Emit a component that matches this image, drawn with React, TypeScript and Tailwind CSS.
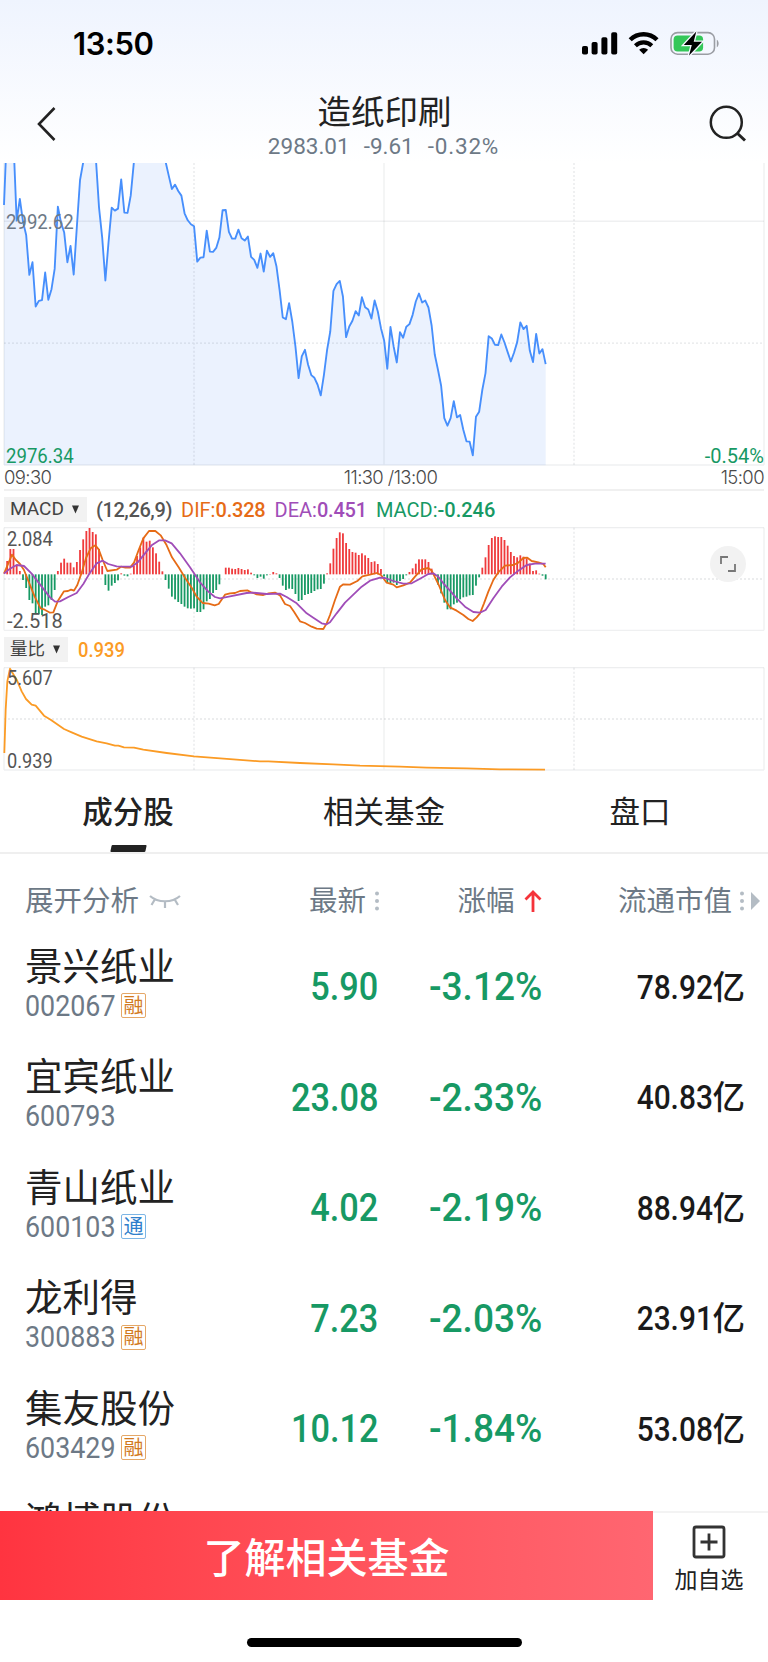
import { ReactNode } from 'react';

interface Stock {
  name: string;
  code: string;
  tag?: '融' | '通';
  price: string;
  change: string;
  cap: string;
}

const stocks: Stock[] = [
  { name: '景兴纸业', code: '002067', tag: '融', price: '5.90', change: '-3.12%', cap: '78.92' },
  { name: '宜宾纸业', code: '600793', price: '23.08', change: '-2.33%', cap: '40.83' },
  { name: '青山纸业', code: '600103', tag: '通', price: '4.02', change: '-2.19%', cap: '88.94' },
  { name: '龙利得', code: '300883', tag: '融', price: '7.23', change: '-2.03%', cap: '23.91' },
  { name: '集友股份', code: '603429', tag: '融', price: '10.12', change: '-1.84%', cap: '53.08' },
];

// One value per sample, in chart units (three units per pixel).
const price = [
  150, -90, -90, -40, 197, 132, 200, 240, 360, 322, 455, 438, 436, 353, 435, 403, 342, 155, 203, 233, 322, 273, 359,
  215, 75, 22, -60, -60, -60, 10, 158, 248, 377, 262, 158, 167, 161, 73, 173, 174, 122, 22, -80, -80, -80, -80, -80,
  -80, -80, -80, -80, 20, 62, 102, 89, 108, 122, 175, 196, 208, 214, 320, 308, 307, 227, 290, 291, 279, 248, 166, 165,
  231, 251, 251, 224, 250, 257, 245, 306, 315, 339, 296, 350, 287, 306, 295, 334, 406, 488, 493, 445, 500, 575, 670,
  605, 585, 630, 661, 669, 690, 722, 660, 585, 530, 408, 388, 378, 425, 547, 515, 498, 469, 482, 427, 457, 464, 491,
  437, 470, 520, 557, 642, 516, 575, 623, 532, 549, 516, 508, 480, 440, 416, 443, 437, 458, 512, 600, 645, 693, 790,
  813, 790, 739, 788, 781, 825, 860, 861, 902, 786, 771, 705, 655, 544, 551, 570, 571, 539, 563, 592, 620, 594, 562,
  503, 523, 513, 588, 622, 537, 596, 583, 628,
];

const macd = [
  343, 303, 267, 267, 317, 333, 360, 384, 420, 430, 459, 463, 465, 440, 436, 420, 390, 333, 308, 296, 308, 308, 322,
  306, 270, 238, 213, 204, 216, 223, 267, 318, 375, 392, 377, 369, 361, 340, 347, 349, 341, 318, 288, 262, 233, 245,
  242, 262, 280, 305, 334, 360, 386, 410, 418, 426, 432, 440, 445, 446, 445, 456, 456, 448, 424, 417, 399, 390, 373,
  343, 323, 323, 326, 327, 324, 327, 330, 328, 338, 346, 354, 350, 356, 346, 342, 336, 340, 354, 377, 390, 386, 387,
  402, 423, 420, 405, 402, 399, 393, 388, 387, 371, 340, 310, 266, 234, 217, 220, 249, 267, 276, 278, 285, 280, 286,
  294, 306, 304, 312, 327, 349, 368, 370, 368, 375, 363, 357, 346, 336, 325, 311, 298, 298, 298, 306, 326, 348, 374,
  400, 428, 448, 448, 433, 428, 418, 412, 410, 406, 405, 377, 352, 323, 292, 255, 234, 229, 231, 231, 240, 257, 276,
  288, 292, 286, 290, 295, 311, 333, 331, 341, 347, 358,
];

const dif =
  '12,341 25,310 36,284 46,298 60,312 72,330 88,370 104,410 122,445 134,449 150,458 160,457 173,424 192,394 204,393 213,389 222,392 232,375 245,338 258,294 272,265 286,256 296,268 308,300 322,333 350,329 363,320 376,323 390,323 402,308 416,270 430,235 447,213 466,213 482,226 500,256 516,292 536,322 556,355 575,383 590,410 608,429 626,431 644,436 656,432 675,404 690,400 705,399 720,393 742,391 752,396 770,403 790,405 806,400 825,398 840,406 855,432 870,438 882,455 900,484 915,489 935,500 950,506 970,507 980,490 990,465 1005,420 1020,380 1030,373 1050,374 1072,363 1087,349 1110,344 1130,339 1143,345 1160,368 1180,374 1190,382 1210,376 1230,368 1245,350 1265,328 1285,324 1295,332 1315,372 1335,420 1350,442 1370,452 1390,465 1405,477 1418,483 1430,472 1440,460 1452,430 1465,395 1480,360 1495,337 1515,317 1540,315 1555,308 1570,294 1582,293 1595,303 1615,307 1630,312 1637,322';

const dea =
  '12,341 30,326 50,315 72,318 95,341 125,380 150,412 165,425 180,424 205,411 230,399 250,372 270,338 290,310 308,302 325,312 350,319 395,320 415,305 435,280 455,256 478,241 495,241 515,250 540,280 570,322 600,367 625,395 645,411 660,415 690,409 740,399 760,398 800,402 840,401 860,411 890,430 920,460 940,473 965,490 980,493 990,487 1010,460 1035,428 1060,404 1085,380 1110,362 1140,353 1155,354 1180,363 1210,371 1235,370 1260,356 1285,342 1300,340 1315,350 1330,370 1350,392 1370,415 1395,440 1420,456 1440,458 1457,450 1480,415 1505,380 1530,352 1555,332 1580,315 1605,311 1637,311';

const ratio =
  '13,370 17,240 22,155 30,117 50,150 65,185 78,208 95,225 107,228 132,258 152,270 192,298 215,308 245,321 290,335 320,341 345,348 355,348 372,353 402,354 430,360 500,370 582,380 700,389 780,395 805,395 900,400 1000,404 1080,408 1200,411 1280,414 1400,416 1500,419 1635,420';

const xAt = (i: number) => 12 + i * 9.503;

const din = "font-['Roboto','Noto_Sans_CJK_SC',sans-serif]";

function Grid({ top, bottom, mid }: { top: number; bottom: number; mid: number }) {
  return (
    <g stroke="#1f2937" strokeOpacity="0.07" strokeWidth="4" fill="none">
      <path d={`M12 ${bottom}H2292M12 ${top}V${bottom}M2292 ${top}V${bottom}M1152 ${top}V${bottom}`} />
      <path
        d={`M12 ${mid}H2292M582 ${top}V${bottom}M1722 ${top}V${bottom}`}
        strokeOpacity="0.11"
        strokeDasharray="6 6"
      />
    </g>
  );
}

function PriceChart() {
  const line = price.map((y, i) => `${xAt(i).toFixed(1)},${y}`).join(' ');
  return (
    <svg viewBox="0 24 2304 910" preserveAspectRatio="none" className="block h-[303px] w-[768px]">
      <polygon points={`12,932 ${line} ${xAt(price.length - 1)},932`} fill="#ebf2fe" />
      <Grid top={24} bottom={931} mid={565} />
      <path d="M12 199H2292" stroke="#1f2937" strokeOpacity="0.07" strokeWidth="4" />
      <polyline points={line} fill="none" stroke="#478ffc" strokeWidth="5.6" strokeLinejoin="round" />
    </svg>
  );
}

function MacdChart() {
  return (
    <svg viewBox="0 201 2304 312" className="block h-[104px] w-[768px]">
      <Grid top={203} bottom={511} mid={357} />
      <path d="M12 203H2292" stroke="#1f2937" strokeOpacity="0.08" strokeWidth="4" />
      {macd.map((y, i) => (
        <rect
          key={i}
          x={xAt(i) - 2.7}
          y={Math.min(y, 343)}
          width="5.4"
          height={Math.abs(y - 343)}
          fill={y < 343 ? '#ef3a3c' : '#179964'}
        />
      ))}
      <polyline points={dif} fill="none" stroke="#e66b16" strokeWidth="5.4" strokeLinejoin="round" />
      <polyline points={dea} fill="none" stroke="#a04db8" strokeWidth="5.4" strokeLinejoin="round" />
    </svg>
  );
}

function RatioChart() {
  return (
    <svg viewBox="0 112 2304 312" className="block h-[104px] w-[768px]">
      <Grid top={114} bottom={421} mid={268} />
      <path d="M12 114H2292" stroke="#1f2937" strokeOpacity="0.08" strokeWidth="4" />
      <polyline points={ratio} fill="none" stroke="#fb9b25" strokeWidth="5.4" strokeLinejoin="round" />
    </svg>
  );
}

function StatusBar() {
  return (
    <div className="flex h-[88px] items-center justify-between pr-[49px] pl-[73px]">
      <span className="font-['Inter',sans-serif] text-[31px] font-semibold tracking-[-0.4px] text-black">13:50</span>
      <svg viewBox="0 0 137 26" className="h-[26px] w-[137px]">
        <g fill="#000">
          <rect x="0" y="15" width="6" height="8.5" rx="1.8" />
          <rect x="9.6" y="11" width="6" height="12.5" rx="1.8" />
          <rect x="19.4" y="6.3" width="6" height="17.2" rx="1.8" />
          <rect x="29.2" y="1.2" width="6" height="22.3" rx="1.8" />
          <path d="M61.6 23.2l-4.5-4.5a6.6 6.6 0 0 1 9 0z" />
        </g>
        <path d="M48.2 8.8a19 19 0 0 1 26.8 0" fill="none" stroke="#000" strokeWidth="4.4" />
        <path d="M53.4 14.7a12 12 0 0 1 16.4 0" fill="none" stroke="#000" strokeWidth="4.2" />
        <rect x="89" y="1.6" width="43.5" height="21.6" rx="6.5" fill="none" stroke="#9a9da3" strokeWidth="1.6" />
        <path d="M134.8 8.8c2.4 1 2.4 6.4 0 7.4z" fill="#9a9da3" />
        <rect x="91.6" y="4.4" width="29.5" height="16" rx="4" fill="#34c759" />
        <path
          d="M114.3 0.5L101.8 14h8l-2.8 10.500L120 10.800h-8.300z"
          fill="#000"
          stroke="#f4f8fe"
          strokeWidth="2.6"
          paintOrder="stroke"
        />
      </svg>
    </div>
  );
}

function NavBar() {
  return (
    <div className="flex h-[75px] items-start justify-between pr-[21px] pl-[36px]">
      <svg viewBox="0 0 22 36" className="mt-[18px] h-9 w-[22px]" fill="none" stroke="#222" strokeWidth="2.6">
        <path d="M18.5 2L3 18l15.500 16" />
      </svg>
      <div className="flex flex-col items-center">
        <h1 className="pl-[2px] text-[33.500px] leading-[48px] text-[#222]">造纸印刷</h1>
        <div className={`${din} -mt-px flex gap-[14px] text-[22.500px] leading-[22px] text-[#6d7986]`}>
          <span>2983.01</span>
          <span>-9.61</span>
          <span className="tracking-[0.8px]">-0.32%</span>
        </div>
      </div>
      <svg viewBox="0 0 38 38" className="mt-[17px] h-[38px] w-[38px]" fill="none" stroke="#222" strokeWidth="2.5">
        <circle cx="17.300" cy="17.300" r="15.500" />
        <path d="M28 28l8 7.500" strokeWidth="3" />
      </svg>
    </div>
  );
}

function AxisLabel({ className, children }: { className: string; children: ReactNode }) {
  return <span className={`${din} absolute text-[20px] leading-[24px] ${className}`}>{children}</span>;
}

function Picker({ children }: { children: ReactNode }) {
  return (
    <span className="flex h-[25px] items-center gap-[8px] bg-[#f2f2f2] pr-[8px] pl-[6px] text-[#444]">
      {children}
      <svg viewBox="0 0 8 9" className="h-[9px] w-[7px]">
        <path d="M0 0h8L4 9z" fill="#333" />
      </svg>
    </span>
  );
}

function Dots() {
  return (
    <svg viewBox="0 0 4 20" className="h-5 w-1" fill="#b4bcc4">
      <circle cx="2" cy="2.500" r="2" />
      <circle cx="2" cy="10" r="2" />
      <circle cx="2" cy="17.500" r="2" />
    </svg>
  );
}

function StockRow({ stock }: { stock: Stock }) {
  return (
    <div className={`${din} flex h-[110.500px] items-center`}>
      <div className="w-[200px] shrink-0 pb-[5px] pl-[25px]">
        <div className="text-[37.500px] leading-[44px] text-[#222]">{stock.name}</div>
        <div className="flex items-center text-[29.500px] leading-[34px] text-[#6d7986]">
          <span className="w-[96px]">
            <span className="inline-block origin-left scale-x-[0.91]">{stock.code}</span>
          </span>
          {stock.tag && (
            <span
              className={`flex size-[25px] items-center justify-center rounded-[2px] border text-[20px] leading-none ${
                stock.tag === '融' ? 'border-[#e5a868] text-[#d27a1e]' : 'border-[#7db6e6] text-[#2f80cc]'
              }`}
            >
              {stock.tag}
            </span>
          )}
        </div>
      </div>
      <div className="w-[178px] pt-[2px] text-right text-[39px] font-medium text-[#179964]">
        <span className="inline-block origin-right scale-x-[0.88]">{stock.price}</span>
      </div>
      <div className="w-[164px] pt-[2px] text-right text-[39px] font-medium text-[#179964]">
        <span className="inline-block origin-right scale-x-[0.95]">{stock.change}</span>
      </div>
      <div className="w-[203px] pt-[4px] text-right text-[32.500px] font-medium text-[#1a1a1a]">
        <span className="inline-block origin-right scale-x-[0.92]">{stock.cap}</span>亿
      </div>
    </div>
  );
}

export default function App() {
  return (
    <div className="flex h-[1662px] w-[768px] flex-col overflow-hidden bg-white font-['Inter','Noto_Sans_CJK_SC',sans-serif]">
      <header className="h-[163px] shrink-0 bg-gradient-to-b from-[#eff4fe] to-white">
        <StatusBar />
        <NavBar />
      </header>

      <section className="relative shrink-0">
        <PriceChart />
        <AxisLabel className="top-[47px] left-[6px] origin-left scale-x-[0.93] text-[#6d7986]">2992.62</AxisLabel>
        <AxisLabel className="top-[281px] left-[6px] origin-left scale-x-[0.93] text-[#179964]">2976.34</AxisLabel>
        <AxisLabel className="top-[281px] right-[4px] origin-right text-[#179964]">-0.54%</AxisLabel>
      </section>
      <div className="mx-1 flex h-[25px] shrink-0 items-center justify-between border-b-2 border-[#f0f0f0] pb-px text-[18.500px] leading-none font-light tracking-[-0.6px] text-[#4a4a4a]">
        <span className="w-[160px]">09:30</span>
        <span className="pl-[13px]">11:30 /13:00</span>
        <span className="w-[160px] text-right">15:00</span>
      </div>

      <div className={`${din} flex h-[36px] shrink-0 items-center gap-[9px] pt-px pl-1 text-[20px] text-[#555]`}>
        <Picker>
          <span className="text-[19px]">MACD</span>
        </Picker>
        <span className="font-medium tracking-[-0.4px]">(12,26,9)</span>
        <span className="text-[#e66b16]">
          DIF:<b className="font-medium tracking-[-0.2px]">0.328</b>
        </span>
        <span className="text-[#a04db8]">
          DEA:<b className="font-medium tracking-[-0.2px]">0.451</b>
        </span>
        <span className="text-[#179964]">
          MACD:<b className="font-medium">-0.246</b>
        </span>
      </div>
      <section className="relative shrink-0">
        <MacdChart />
        <AxisLabel className="top-0 left-[7px] origin-left scale-x-[0.91] text-[#555]">2.084</AxisLabel>
        <AxisLabel className="bottom-[-2px] left-[7px] origin-left text-[#555]">-2.518</AxisLabel>
        <div className="absolute top-[18.500px] left-[710px] flex size-9 items-center justify-center rounded-full bg-[#f2f2f2]">
          <svg viewBox="0 0 16 16" className="size-4" fill="none" stroke="#777" strokeWidth="1.8">
            <path d="M1 8V1h7M15 8v7H8" />
          </svg>
        </div>
      </section>

      <div className={`${din} flex h-[36px] shrink-0 items-center gap-[10px] pt-px pl-1 text-[20px] text-[#fb9b25]`}>
        <Picker>
          <span className="text-[17.500px]">量比</span>
        </Picker>
        <span className="origin-left scale-x-[0.92] font-medium">0.939</span>
      </div>
      <section className="relative shrink-0">
        <RatioChart />
        <AxisLabel className="top-[-1px] left-[7px] origin-left scale-x-[0.91] text-[#555]">5.607</AxisLabel>
        <AxisLabel className="bottom-[-2px] left-[7px] origin-left scale-x-[0.91] text-[#555]">0.939</AxisLabel>
      </section>

      <nav className="flex h-[83px] shrink-0 border-b-2 border-[#efefef] text-[30.500px] text-[#222]">
        <div className="flex flex-1 flex-col items-center justify-between">
          <span className="pt-[18px] leading-[45px] font-medium">成分股</span>
          <span className="h-[7px] w-[35px] -skew-x-12 rounded-[1px] bg-[#222]" />
        </div>
        <div className="flex-1 pt-[18px] text-center leading-[45px]">相关基金</div>
        <div className="flex-1 pt-[18px] text-center leading-[45px]">盘口</div>
      </nav>

      <div className="flex h-[76px] shrink-0 items-center pt-[18px] text-[28.500px] text-[#6d7986]">
        <div className="flex w-[200px] items-center gap-[10px] pl-[25px]">
          展开分析
          <svg viewBox="0 0 32 15" className="h-[15px] w-8" fill="none" stroke="#b4bcc4" strokeWidth="2.2">
            <path d="M1 2c8 7 22 7 30 0M5.500 6l-3 5M16 7.500V14M26 6l3 5" />
          </svg>
        </div>
        <div className="flex w-[178.500px] items-center justify-end gap-[8.500px]">
          最新
          <Dots />
        </div>
        <div className="flex w-[163px] items-center justify-end gap-[9px]">
          涨幅
          <svg viewBox="0 0 18 22" className="h-[22px] w-[18px]" fill="none" stroke="#f5333a" strokeWidth="2.800">
            <path d="M9 22V2M1.500 9.500L9 2l7.500 7.500" />
          </svg>
        </div>
        <div className="flex w-[218.500px] items-center justify-end gap-[8px]">
          流通市值
          <span className="flex items-center gap-[7px]">
            <Dots />
            <svg viewBox="0 0 9 18" className="h-[18px] w-[9px]">
              <path d="M0 0l9 9-9 9z" fill="#b4bcc4" />
            </svg>
          </span>
        </div>
      </div>

      <main className="h-[581px] shrink-0 overflow-hidden">
        <div className="pt-[1px]">
          {stocks.map((stock) => (
            <StockRow key={stock.code} stock={stock} />
          ))}
          <div className="pt-[15px] pl-[25px] text-[37.500px] leading-[44px] text-[#222]">鸿博股份</div>
        </div>
      </main>

      <footer className="flex h-[89px] shrink-0">
        <button className="w-[653px] bg-gradient-to-r from-[#ff3440] to-[#ff6671] pt-[6px] text-[41px] font-medium text-white">
          了解相关基金
        </button>
        <div className="flex flex-1 flex-col items-center gap-[4px] border-t-2 border-[#f3f3f3] pt-[12px] pr-[3px] text-[23px] text-[#222]">
          <svg viewBox="0 0 34 34" className="h-[34px] w-[34px]" fill="none" stroke="#333" strokeWidth="2.800">
            <rect x="2" y="2" width="30" height="30" rx="2" />
            <path d="M17 8.500v17M8.500 17h17" />
          </svg>
          <span>加自选</span>
        </div>
      </footer>
      <div className="mt-[38px] ml-[247px] h-[9px] w-[275px] shrink-0 rounded-full bg-black" />
    </div>
  );
}
